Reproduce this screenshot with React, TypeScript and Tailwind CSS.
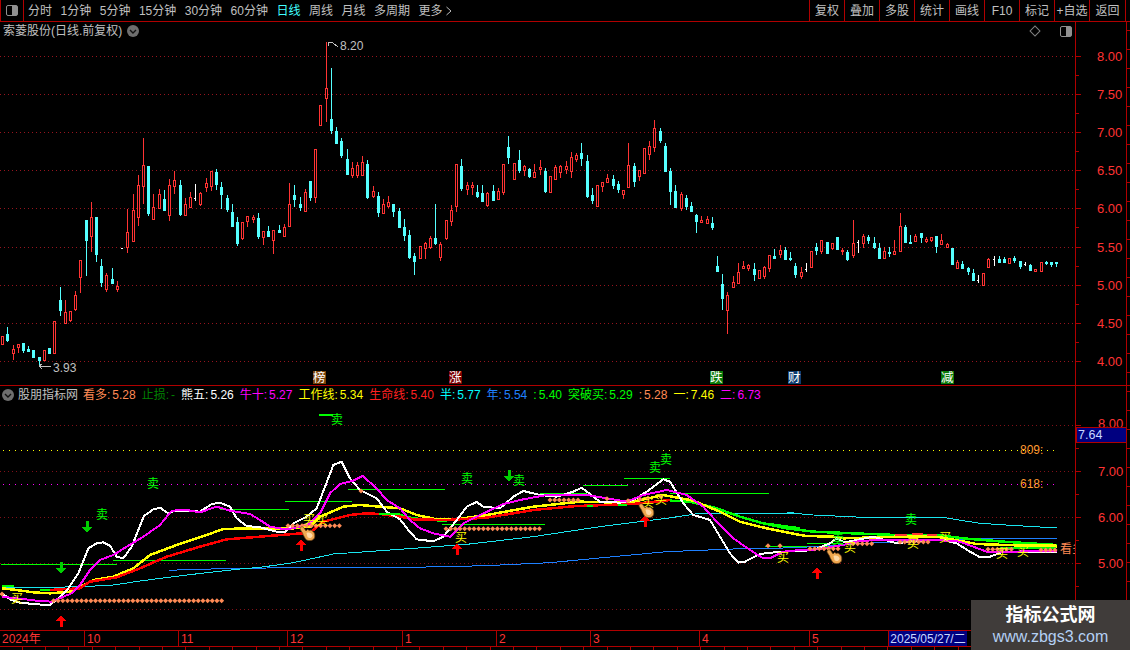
const LINE = "#b00000";
const RED = "#ff3333";
const CYAN = "#55ffff";
const LIME = "#00ff00";
const ORANGE = "#ff8a55";

// [x, wickTop, bodyTop, bodyBottom, wickBottom, colour], read off the chart at 3x
type Candle = [number, number, number, number, number, "r" | "c" | "w"];

const CANDLES_A: Candle[] = [
  [7, 619, 619, 644, 644, "r"], [22, 591, 612, 632, 637, "c"], [40, 646, 657, 671, 690, "r"], [55, 642, 642, 653, 668, "r"],
  [70, 640, 640, 662, 668, "c"], [85, 648, 657, 663, 663, "c"], [100, 660, 660, 681, 681, "c"], [118, 680, 682, 690, 712, "c"],
  [133, 660, 660, 690, 690, "r"], [148, 654, 654, 669, 672, "c"], [163, 573, 573, 671, 671, "r"], [181, 472, 510, 540, 558, "c"],
  [196, 510, 546, 579, 579, "r"], [211, 543, 543, 570, 575, "r"], [226, 484, 495, 537, 543, "r"], [241, 390, 390, 443, 489, "r"],
  [259, 270, 270, 330, 438, "c"], [274, 216, 261, 318, 366, "r"], [289, 261, 261, 372, 396, "c"], [304, 387, 408, 456, 471, "c"],
  [319, 429, 435, 477, 486, "r"], [337, 414, 447, 459, 462, "c"], [352, 453, 468, 477, 486, "r"], [367, 354, 354, 356, 356, "w"],
  [382, 237, 306, 351, 369, "r"], [400, 192, 240, 333, 333, "r"], [415, 135, 165, 261, 288, "r"], [430, 24, 105, 168, 222, "r"],
  [445, 108, 108, 249, 258, "c"], [460, 192, 232, 267, 267, "r"], [478, 177, 192, 234, 237, "r"], [493, 180, 207, 240, 243, "c"],
  [508, 147, 165, 255, 273, "r"], [523, 123, 150, 168, 192, "r"], [541, 150, 165, 252, 258, "c"], [556, 204, 222, 255, 258, "r"],
  [571, 186, 201, 231, 231, "r"], [586, 162, 204, 206, 213, "w"], [601, 186, 189, 222, 228, "r"], [619, 144, 159, 171, 186, "r"],
  [634, 123, 123, 168, 183, "r"], [649, 117, 126, 162, 180, "c"], [664, 156, 171, 192, 237, "c"], [682, 195, 204, 237, 246, "c"],
  [697, 222, 246, 288, 291, "c"], [712, 261, 276, 339, 348, "c"], [727, 276, 276, 324, 330, "r"], [742, 258, 258, 273, 291, "r"],
  [760, 255, 261, 267, 279, "r"], [775, 249, 264, 318, 327, "c"], [790, 303, 303, 321, 345, "r"], [805, 288, 303, 318, 321, "c"],
  [820, 300, 300, 330, 372, "r"], [838, 285, 300, 306, 309, "c"], [853, 282, 291, 318, 318, "r"], [868, 159, 222, 288, 288, "r"],
  [883, 165, 195, 207, 231, "c"], [901, 201, 222, 231, 243, "c"], [916, 177, 186, 243, 243, "r"], [931, 154, 154, 201, 213, "c"],
  [946, 57, 57, 201, 219, "r"], [961, -75, -75, -15, -12, "r"], [979, -264, -126, -96, -24, "r"], [994, -186, -33, 0, 12, "c"],
  [1009, -9, 3, 39, 42, "c"], [1024, 24, 33, 75, 84, "c"], [1042, 57, 87, 132, 135, "c"], [1057, 96, 114, 135, 144, "r"],
  [1072, 96, 105, 135, 144, "r"], [1087, 78, 96, 135, 135, "r"], [1102, 90, 102, 201, 207, "c"], [1120, 168, 183, 198, 204, "r"],
  [1135, 186, 198, 246, 261, "c"],
];

const CANDLES_B: Candle[] = [
  [10, 297, 313, 339, 339, "r"], [25, 288, 306, 318, 324, "r"], [40, 312, 312, 333, 351, "c"], [58, 324, 333, 381, 384, "c"],
  [73, 357, 381, 405, 423, "c"], [88, 390, 405, 471, 477, "c"], [103, 459, 468, 483, 525, "c"], [121, 438, 438, 474, 477, "r"],
  [136, 426, 429, 444, 477, "r"], [151, 408, 414, 441, 447, "r"], [166, 312, 414, 429, 435, "c"], [181, 426, 432, 471, 483, "r"],
  [199, 360, 360, 414, 420, "r"], [214, 315, 330, 363, 378, "r"], [229, 192, 192, 318, 336, "r"], [244, 177, 198, 264, 273, "c"],
  [262, 246, 255, 267, 285, "r"], [277, 246, 255, 261, 285, "r"], [292, 255, 276, 288, 294, "c"], [307, 255, 279, 303, 303, "c"],
  [322, 276, 279, 315, 321, "r"], [340, 255, 273, 300, 300, "c"], [355, 264, 273, 297, 297, "r"], [370, 192, 192, 276, 285, "r"],
  [385, 108, 141, 171, 192, "c"], [403, 189, 189, 237, 237, "r"], [418, 150, 180, 210, 219, "c"], [433, 195, 198, 210, 228, "r"],
  [448, 204, 207, 228, 234, "c"], [463, 192, 216, 231, 231, "r"], [481, 180, 201, 207, 225, "r"], [496, 204, 213, 273, 279, "c"],
  [511, 228, 228, 276, 276, "r"], [526, 195, 201, 237, 237, "r"], [541, 195, 198, 216, 234, "r"], [559, 183, 198, 207, 222, "r"],
  [574, 156, 171, 213, 234, "r"], [589, 159, 165, 177, 186, "r"], [604, 129, 159, 174, 198, "c"], [622, 165, 183, 288, 294, "c"],
  [637, 264, 285, 300, 312, "c"], [652, 255, 255, 318, 321, "r"], [667, 246, 246, 258, 276, "r"], [682, 222, 234, 246, 246, "r"],
  [700, 225, 237, 255, 267, "c"], [715, 243, 252, 267, 279, "c"], [730, 270, 270, 282, 297, "r"], [745, 129, 195, 261, 264, "r"],
  [763, 189, 198, 243, 261, "c"], [778, 210, 210, 228, 243, "r"], [793, 144, 144, 219, 219, "r"], [808, 123, 138, 162, 180, "r"],
  [823, 60, 84, 141, 156, "r"], [841, 84, 93, 120, 129, "c"], [856, 129, 138, 213, 216, "c"], [871, 204, 213, 273, 315, "c"],
  [886, 255, 273, 321, 324, "c"], [904, 276, 282, 324, 333, "r"], [919, 285, 294, 318, 330, "c"], [934, 306, 318, 333, 336, "c"],
  [949, 342, 345, 363, 399, "c"], [964, 348, 360, 366, 366, "r"], [982, 348, 357, 369, 369, "r"], [997, 351, 369, 381, 390, "c"],
  [1012, 468, 498, 513, 513, "c"], [1027, 522, 552, 594, 630, "c"], [1042, 576, 585, 630, 702, "r"], [1060, 528, 546, 561, 561, "r"],
  [1075, 489, 516, 549, 552, "r"], [1090, 483, 498, 504, 507, "r"], [1105, 492, 495, 504, 513, "r"], [1123, 489, 507, 522, 543, "c"],
  [1138, 510, 510, 534, 534, "r"],
];

const CANDLES_C: Candle[] = [
  [193, 228, 231, 258, 267, "r"], [208, 195, 195, 234, 246, "r"], [223, 177, 198, 204, 207, "c"], [241, 165, 180, 192, 204, "r"],
  [256, 171, 180, 207, 210, "c"], [271, 186, 204, 207, 213, "c"], [286, 219, 228, 252, 264, "c"], [304, 231, 246, 258, 267, "r"],
  [319, 219, 236, 238, 246, "w"], [334, 183, 183, 231, 231, "r"], [349, 159, 171, 180, 195, "c"], [364, 150, 150, 183, 192, "r"],
  [382, 156, 156, 189, 192, "c"], [397, 159, 159, 174, 180, "r"], [412, 141, 141, 177, 180, "c"], [427, 174, 180, 183, 195, "r"],
  [442, 180, 186, 207, 213, "c"], [460, 90, 159, 195, 204, "r"], [475, 150, 155, 157, 189, "w"], [490, 132, 138, 159, 174, "r"],
  [505, 135, 141, 150, 162, "c"], [523, 141, 159, 171, 177, "c"], [538, 159, 174, 204, 207, "c"], [553, 171, 183, 204, 207, "r"],
  [568, 171, 186, 189, 201, "c"], [583, 150, 183, 192, 192, "r"], [601, 69, 108, 183, 183, "r"], [616, 105, 111, 156, 159, "c"],
  [631, 135, 156, 160, 162, "c"], [646, 132, 138, 153, 153, "r"], [664, 129, 129, 141, 159, "c"], [679, 141, 147, 153, 159, "r"],
  [694, 141, 141, 150, 156, "r"], [709, 138, 138, 168, 189, "c"], [724, 132, 150, 162, 162, "r"], [742, 159, 162, 171, 174, "r"],
  [757, 174, 174, 222, 225, "c"], [772, 210, 216, 234, 237, "r"], [787, 213, 222, 234, 237, "c"], [805, 231, 234, 243, 255, "c"],
  [820, 237, 249, 270, 270, "c"], [835, 255, 269, 271, 279, "w"], [850, 249, 249, 285, 285, "r"], [865, 204, 207, 231, 231, "r"],
  [883, 198, 206, 208, 228, "w"], [898, 198, 207, 216, 219, "c"], [913, 201, 207, 216, 216, "c"], [928, 204, 204, 219, 219, "r"],
  [943, 198, 204, 210, 219, "c"], [961, 213, 213, 228, 237, "c"], [976, 216, 221, 223, 228, "w"], [991, 222, 225, 240, 243, "c"],
  [1006, 237, 237, 243, 246, "r"], [1024, 216, 216, 243, 243, "r"], [1039, 213, 216, 219, 225, "c"], [1054, 216, 216, 222, 231, "c"],
  [1069, 216, 216, 219, 231, "c"],
];

const toPx = (list: Candle[], ox: number, oy: number): Candle[] =>
  list.map(([x, a, b, c, d, k]) => [Math.floor(ox + x / 3) + 0.5, oy + a / 3, oy + b / 3, oy + c / 3, oy + d / 3, k]);

const CANDLES: Candle[] = [...toPx(CANDLES_A, 0, 130), ...toPx(CANDLES_B, 380, 100), ...toPx(CANDLES_C, 700, 190)];

const PRICE_Y = [56, 94, 132, 170, 208, 247, 285, 323, 361];

// lower panel coordinates come from three 3x crops with different left edges
const pts = (ox: number, flat: number[]) => {
  const out: string[] = [];
  for (let i = 0; i < flat.length; i += 2) out.push(`${ox + flat[i] / 3},${380 + flat[i + 1] / 3}`);
  return out;
};
const path = (a: number[], b: number[] = [], c: number[] = []) => [...pts(0, a), ...pts(400, b), ...pts(730, c)].join(" ");

const WHITE_LINE = path(
  [6,640,30,658,60,668,110,673,150,675,175,655,205,625,235,580,265,505,290,490,310,487,330,497,350,530,370,535,395,500,415,450,432,408,460,388,480,383,505,400,525,392,560,392,600,395,635,372,660,368,690,380,710,415,740,438,780,442,830,455,855,455,880,430,920,410,950,385,975,320,1000,255,1025,245,1050,295,1080,330,1130,355,1160,395,1200,418],
  [25,450,50,478,100,484,130,470,170,420,200,380,230,366,250,380,300,385,340,350,370,333,420,345,470,350,520,335,545,323,580,350,600,365,660,368,700,360,740,335,790,298,810,305,850,370,880,405,930,420,960,470,990,520,1015,548,1035,545,1080,522,1140,515,1200,513],
  [250,510,300,490,320,475,345,487,430,470,500,490,560,482,640,480,680,490,720,515,750,532,780,530,820,515,880,515,980,517],
);
const MAGENTA_LINE = path(
  [6,650,50,655,110,662,155,665,190,650,215,640,240,615,270,570,300,540,340,525,380,500,430,470,480,435,515,392,560,390,600,397,650,380,690,392,750,402,780,420,810,440,850,447,880,445,930,430,960,400,990,340,1020,312,1060,302,1088,288,1130,325,1160,360,1200,385],
  [30,420,60,445,100,460,150,470,190,430,240,405,310,372,370,358,440,345,560,345,620,355,680,365,730,345,800,330,860,345,910,380,950,425,1000,475,1050,510,1090,535,1110,535,1150,515,1200,510],
  [250,510,340,495,390,482,500,480,620,480,690,485,730,500,770,515,850,515,980,512],
);
const YELLOW_LINE = path(
  [6,625,50,630,100,637,150,640,210,635,240,620,280,600,340,590,400,565,450,525,530,495,620,465,670,447,760,445,880,445,930,440,960,410,1030,380,1080,375,1200,385],
  [50,405,110,418,170,418,260,405,400,380,540,365,660,368,700,365,790,345,880,362,960,395,1020,425,1100,445,1200,465],
  [230,468,310,470,340,475,500,470,620,470,740,492,980,500],
);
const RED_LINE = path(
  [150,630,240,625,270,605,350,592,420,565,500,530,600,500,680,478,880,462,930,458,970,425,1050,405,1100,400,1140,402],
  [0,410,40,418,140,420,260,413,400,390,530,378,700,372,810,360],
);
const GREEN_LINE = path(
  [],
  [0,405,40,415,90,420,140,422],
);
const GREEN_LINE_2 = path(
  [],
  [810,362,870,365,950,385,1020,410,1090,430,1200,445],
  [100,430,170,445,250,455,370,460,500,465,620,465,700,475,820,485,980,495],
);
const CYAN_LINE = path(
  [6,622,140,622,250,620,340,615,420,603,520,590,620,578,720,567,780,562,880,548,1000,522,1200,508],
  [200,493,400,470,600,440,800,415,900,400,1200,400],
  [170,398,250,405,400,412,650,414,750,430,860,437,980,444],
);
const BLUE_LINE = path(
  [508,571,580,568,800,564,1200,562],
  [160,560,300,555,450,548,640,530,800,515,1000,507,1200,503],
  [200,503,400,490,650,480,800,475,980,475],
);

// thin lime levels and short thick pieces: x1, x2, y in page pixels
const THIN_LEVELS = [
  [1, 117, 564], [113, 226, 560], [220, 289, 509], [285, 352, 501], [348, 445, 489],
  [442, 545, 524], [540, 587, 493], [583, 628, 485], [624, 670, 478], [670, 769, 493],
  [765, 835, 546], [807, 843, 543],
];
const THICK_BITS: [number, number, number, string][] = [
  [2, 14, 586, LIME], [40, 50, 590, LIME], [379, 400, 514, LIME], [587, 593, 506, LIME], [618, 627, 505, LIME],
  [895, 907, 535, RED], [912, 923, 534, RED], [927, 937, 535, RED], [319, 333, 415, LIME],
  [1000, 1056, 548, LIME], [1000, 1056, 545, "#ffff00"],
];

const range = (from: number, to: number, step: number) => {
  const out: number[] = [];
  for (let v = from; v <= to + 0.1; v += step) out.push(v);
  return out;
};
const DOTS: [number, number][] = [
  [2, 594],
  ...range(53.5, 222, 4.67).map((x): [number, number] => [x, 600.7]),
  ...range(288, 342, 4.67).map((x): [number, number] => [x, 525.7]),
  ...range(446, 540, 4.67).map((x): [number, number] => [x, 528.7]),
  ...range(550, 582, 4.67).map((x): [number, number] => [x, 500]),
  [361, 491], [607, 498.7], [628, 500.7], [640, 499.3], [648, 498], [661, 496.7],
  [768, 545.7], [780, 545.7],
  ...range(810, 842, 4.67).map((x): [number, number] => [x, 548.7]),
  ...range(853, 873, 4.67).map((x): [number, number] => [x, 543.7]),
  ...range(900, 931, 4.67).map((x): [number, number] => [x, 542]),
  ...range(988, 1014, 4.67).map((x): [number, number] => [x, 549.3]),
  ...range(1041, 1056, 4.67).map((x): [number, number] => [x, 550]),
];

const SELL: [number, number][] = [
  [102, 514], [153, 483], [337, 419], [467, 478], [519, 480], [655, 467], [666, 459], [911, 519], [838, 539],
];
const BUY: [number, number][] = [
  [17, 598], [309, 519], [322, 520], [461, 537], [783, 557], [648, 502], [661, 499],
  [913, 543], [945, 537], [1002, 553], [1023, 551], [850, 547],
];
const ARROWS_UP: [number, number][] = [[61, 621], [301, 545], [457, 549], [645, 521], [817, 573]];
const ARROWS_DOWN: [number, number][] = [[87, 527], [61, 568], [509, 476]];
const HANDS: [number, number][] = [[307, 533], [646, 510], [834, 556]];

const TAGS: [number, string, string][] = [
  [313, "榜", "#7a4308"],
  [449, "涨", "#7d0000"],
  [710, "跌", "#0a7a0a"],
  [788, "财", "#0e3d70"],
  [941, "减", "#0a7a0a"],
];

const MONTHS: [string, number][] = [
  ["2024年", 85], ["10", 94], ["11", 109], ["12", 115], ["1", 94], ["2", 94], ["3", 109], ["4", 110], ["5", 79],
];

const LEGEND: [string, string, string][] = [
  ["看多:", "5.28", ORANGE],
  ["止损:", "-", "#008000"],
  ["熊五:", "5.26", "#ffffff"],
  ["牛十:", "5.27", "#ff00ff"],
  ["工作线:", "5.34", "#ffff00"],
  ["生命线:", "5.40", "#ff2020"],
  ["半:", "5.77", "#00ffff"],
  ["年:", "5.54", "#2080ff"],
  [":", "5.40", LIME],
  ["突破买:", "5.29", LIME],
  [":", "5.28", ORANGE],
  ["一:", "7.46", "#ffff00"],
  ["二:", "6.73", "#ff00ff"],
];

function CandleMark({ c }: { c: Candle }) {
  const [x, wt, bt, bb, wb, k] = c;
  if (k === "w") {
    return (
      <g stroke="#ffffff">
        <line x1={x} x2={x} y1={wt} y2={wb} />
        <line x1={x - 2} x2={x} y1={(bt + bb) / 2} y2={(bt + bb) / 2} />
      </g>
    );
  }
  const col = k === "r" ? RED : CYAN;
  return (
    <g stroke={col}>
      <line x1={x} x2={x} y1={wt} y2={bt} />
      <line x1={x} x2={x} y1={bb} y2={wb} />
      <rect x={x - 1} y={bt} width={2} height={Math.max(bb - bt, 1)} fill={k === "r" ? "#000000" : col} />
    </g>
  );
}

function Hand({ x, y }: { x: number; y: number }) {
  return (
    <g transform={`translate(${x - 7} ${y - 7})`}>
      <path
        d="M0 3 C0 0.5 3 0 4 2 L6 5 L7.5 3.5 L9.5 4.5 L11 4 L13 5.5 C15 7 15 10 14.5 12 C13 15 8 15.5 5.5 13 C4.5 11 3 9 2.5 7 Z"
        fill="#f0a850"
        stroke="#6b4014"
        strokeWidth={0.7}
      />
      <path d="M6.5 7 C9 6 12 7 12.5 9.5 C12.5 12 9 13 7.5 11 Z" fill="#ffd9a6" />
    </g>
  );
}

function PriceChart() {
  return (
    <svg viewBox="0 40 1075 345" className="block h-[345px] w-[1075px]">
      {PRICE_Y.map((y) => (
        <line key={y} x1={0} x2={1075} y1={y + 0.5} y2={y + 0.5} stroke="#96141e" strokeDasharray="1 3" />
      ))}
      <g shapeRendering="crispEdges">
        {CANDLES.map((c, i) => (
          <CandleMark key={i} c={c} />
        ))}
        <polyline points="328,46 329,42 333,43 338,47" fill="none" stroke="#c0c0c0" />
        <polyline points="39,366 51,366" fill="none" stroke="#c0c0c0" />
        <polyline points="42,364 39,366 42,369" fill="none" stroke="#c0c0c0" />
        {TAGS.map(([x, , bg]) => (
          <rect key={x} x={x} y={371} width={13} height={13} fill={bg} />
        ))}
      </g>
      <text x={340} y={50} fontSize={12} fill="#c0c0c0">8.20</text>
      <text x={53} y={372} fontSize={12} fill="#c0c0c0">3.93</text>
      {TAGS.map(([x, t]) => (
        <text key={t} x={x} y={382} fontSize={12.5} fill="#ffffff">{t}</text>
      ))}
    </svg>
  );
}

function IndicatorChart() {
  return (
    <svg viewBox="0 403 1075 227" className="block h-[227px] w-[1075px]">
      {[425, 471, 517, 563, 609].map((y) => (
        <line key={y} x1={0} x2={1075} y1={y + 0.5} y2={y + 0.5} stroke="#801018" strokeDasharray="1 3" />
      ))}
      <line x1={3} x2={1057} y1={450.5} y2={450.5} stroke="#ffff00" strokeDasharray="1 5" />
      <line x1={3} x2={1057} y1={484.5} y2={484.5} stroke="#ff00ff" strokeDasharray="1 5" />
      <g shapeRendering="crispEdges" fill="none">
        {THIN_LEVELS.map(([a, b, y]) => (
          <line key={`${a}-${y}`} x1={a} x2={b} y1={y + 0.5} y2={y + 0.5} stroke={LIME} />
        ))}
        <polyline points={BLUE_LINE} stroke="#1e80ff" strokeWidth={1} />
        <polyline points={CYAN_LINE} stroke="#19e6f0" strokeWidth={1} />
        <polyline points={GREEN_LINE} stroke={LIME} strokeWidth={2.5} />
        <polyline points={GREEN_LINE_2} stroke={LIME} strokeWidth={2.5} />
        <polyline points={YELLOW_LINE} stroke="#ffff00" strokeWidth={2.5} />
        <polyline points={RED_LINE} stroke="#ff0000" strokeWidth={2.5} />
        <polyline points={WHITE_LINE} stroke="#ffffff" strokeWidth={2} />
        <polyline points={MAGENTA_LINE} stroke="#ff00ff" strokeWidth={2} />
        {THICK_BITS.map(([a, b, y, col]) => (
          <line key={`${a}-${y}`} x1={a} x2={b} y1={y} y2={y} stroke={col} strokeWidth={2.5} />
        ))}
      </g>
      {DOTS.map(([x, y], i) => (
        <path key={i} d={`M${x} ${y - 2.5} L${x + 2.5} ${y} L${x} ${y + 2.5} L${x - 2.5} ${y} Z`} fill={ORANGE} />
      ))}
      {SELL.map(([x, y]) => (
        <text key={`${x}-${y}`} x={x - 6} y={y + 5} fontSize={12} fill={LIME}>卖</text>
      ))}
      {BUY.map(([x, y], i) => (
        <text key={i} x={x - 6} y={y + 5} fontSize={12} fill="#ffff00">买</text>
      ))}
      <g shapeRendering="crispEdges">
        {ARROWS_UP.map(([x, y]) => (
          <path key={x} d={`M${x} ${y - 6} L${x + 5} ${y} L${x + 1.5} ${y} L${x + 1.5} ${y + 6} L${x - 1.5} ${y + 6} L${x - 1.5} ${y} L${x - 5} ${y} Z`} fill="#ff0000" />
        ))}
        {ARROWS_DOWN.map(([x, y]) => (
          <path key={x} d={`M${x} ${y + 6} L${x + 5} ${y} L${x + 1.5} ${y} L${x + 1.5} ${y - 6} L${x - 1.5} ${y - 6} L${x - 1.5} ${y} L${x - 5} ${y} Z`} fill="#00d000" />
        ))}
      </g>
      {HANDS.map(([x, y]) => (
        <Hand key={x} x={x} y={y} />
      ))}
      <text x={1020} y={454} fontSize={12} fill="#ff9a30">809:</text>
      <text x={1020} y={488} fontSize={12} fill="#ff9a30">618:</text>
      <text x={1060} y={553} fontSize={12} fill={ORANGE}>看多</text>
    </svg>
  );
}

function PriceAxis() {
  const upper: [number, string][] = [
    [56, "8.00"], [94, "7.50"], [132, "7.00"], [170, "6.50"], [208, "6.00"], [247, "5.50"], [285, "5.00"], [323, "4.50"], [361, "4.00"],
  ];
  const lower: [number, string][] = [[471, "7.00"], [517, "6.00"], [563, "5.00"]];
  return (
    <svg viewBox="1076 22 54 628" className="block h-[628px] w-[54px]">
      <g shapeRendering="crispEdges" stroke={LINE}>
        <line x1={1126.5} x2={1126.5} y1={22} y2={650} />
        <line x1={1076} x2={1130} y1={385.5} y2={385.5} />
        {upper.map(([y]) => (
          <line key={y} x1={1076} x2={1081} y1={y + 0.5} y2={y + 0.5} />
        ))}
        {upper.slice(0, 8).map(([y]) => (
          <line key={y} x1={1076} x2={1079} y1={y + 19.5} y2={y + 19.5} />
        ))}
        {[425, 471, 517, 563, 609].map((y) => (
          <line key={y} x1={1076} x2={1081} y1={y + 0.5} y2={y + 0.5} />
        ))}
        {[448, 494, 540, 586].map((y) => (
          <line key={y} x1={1076} x2={1079} y1={y + 0.5} y2={y + 0.5} />
        ))}
        {range(30, 640, 19).map((y) => (
          <line key={y} x1={1127} x2={1130} y1={y + 0.5} y2={y + 0.5} />
        ))}
      </g>
      {upper.map(([y, t]) => (
        <text key={y} x={1097} y={y + 4.5} fontSize={13} fill={RED}>{t}</text>
      ))}
      <text x={1098} y={428} fontSize={13} fill={RED}>8.00</text>
      {lower.map(([y, t]) => (
        <text key={y} x={1098} y={y + 4.5} fontSize={13} fill={RED}>{t}</text>
      ))}
      <rect x={1076.5} y={427.5} width={50} height={15} fill="#000080" stroke={LINE} shapeRendering="crispEdges" />
      <text x={1078} y={439} fontSize={12.5} fill="#c8d8ff">7.64</text>
    </svg>
  );
}

function CircleChevron() {
  return (
    <span className="flex h-[12px] w-[12px] items-center justify-center rounded-full bg-[#6e6e6e]">
      <svg viewBox="0 0 12 12" className="h-[12px] w-[12px]">
        <path d="M3 5 L6 8 L9 5" fill="none" stroke="#111111" strokeWidth={1.4} />
      </svg>
    </span>
  );
}

function PanelIcon() {
  return (
    <span className="flex h-[11px] w-[12px] items-center justify-center rounded-[2px] border border-[#909090] bg-black">
      <span className="ml-auto h-full w-[5px] bg-[#909090]" />
    </span>
  );
}

const NAV = ["分时", "1分钟", "5分钟", "15分钟", "30分钟", "60分钟", "日线", "周线", "月线", "多周期"];
const ACTIONS = ["复权", "叠加", "多股", "统计", "画线", "F10", "标记", "+自选", "返回"];

export default function App() {
  return (
    <div className="relative flex h-[650px] w-[1130px] flex-col overflow-hidden bg-black text-[12px] text-[#c0c0c0] [font-family:'Liberation_Sans','Noto_Sans_CJK_SC',sans-serif]">
      <header className="flex h-[22px] shrink-0 items-stretch border-b border-[#b00000]">
        <div className="flex w-[24px] items-center justify-center border-x border-[#b00000]">
          <PanelIcon />
        </div>
        <nav className="flex items-center gap-[8.5px] pl-[4px]">
          {NAV.map((n) => (
            <span key={n} className={n === "日线" ? "text-[#40ffff]" : ""}>{n}</span>
          ))}
          <span className="flex items-center gap-[2px]">
            更多
            <svg viewBox="0 0 8 12" className="h-[12px] w-[8px]">
              <path d="M1.5 2 L6 6 L1.5 10" fill="none" stroke="#c0c0c0" />
            </svg>
          </span>
        </nav>
        <div className="ml-auto flex pr-[4px]">
          {ACTIONS.map((a) => (
            <span key={a} className="flex w-[35px] items-center justify-center border-l border-[#b00000] last:w-[37px] last:border-r">
              {a}
            </span>
          ))}
        </div>
      </header>

      <div className="flex min-h-0 flex-1">
        <div className="flex w-[1076px] shrink-0 flex-col border-r border-[#b00000]">
          <section className="border-b border-[#b00000]">
            <div className="flex h-[18px] items-center pl-[3px] pr-[3px]">
              <span>索菱股份(日线.前复权)</span>
              <span className="ml-[5px]"><CircleChevron /></span>
              <span className="ml-auto mr-[21px] h-[8px] w-[8px] rotate-45 border border-[#808080]" />
              <PanelIcon />
            </div>
            <PriceChart />
          </section>

          <section>
            <div className="flex h-[17px] items-center gap-[6px] pl-[2px]">
              <CircleChevron />
              <span className="-ml-[2px] -mr-[1px]">股朋指标网</span>
              {LEGEND.map(([label, value, col], i) => (
                <span key={i} className="flex gap-[2px] whitespace-nowrap" style={{ color: col }}>
                  <span>{label}</span>
                  <span>{value}</span>
                </span>
              ))}
            </div>
            <IndicatorChart />
          </section>

          <div className="relative flex h-[17px] shrink-0 items-center border-y border-[#b00000] text-[#ff3333]">
            {MONTHS.map(([m, w]) => (
              <span key={m} className="flex h-full items-center border-r border-[#b00000] pl-[2px]" style={{ width: w }}>
                {m}
              </span>
            ))}
            <span className="flex h-full w-[78px] items-center justify-center bg-[#000080] text-[#c8d8ff]">2025/05/27/二</span>
          </div>
          <svg viewBox="0 0 1075 3" className="block h-[3px] w-[1075px] shrink-0">
            {range(22, 1075, 23.4).map((x) => (
              <line key={x} x1={x} x2={x} y1={0} y2={3} stroke={LINE} shapeRendering="crispEdges" />
            ))}
          </svg>
        </div>
        <PriceAxis />
      </div>

      <div className="absolute bottom-0 right-0 flex h-[50px] w-[159px] flex-col items-center justify-center bg-[#403c3a]">
        <span className="text-[18px] leading-[23px] font-bold text-white">指标公式网</span>
        <span className="text-[16px] leading-[20px] text-[#b4d0f4]">www.zbgs3.com</span>
      </div>
    </div>
  );
}
